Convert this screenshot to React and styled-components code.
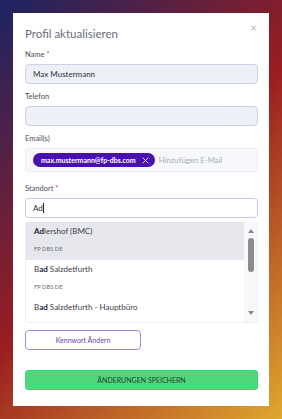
import React from "react";
import styled, { createGlobalStyle } from "styled-components";

const GlobalStyle = createGlobalStyle`
  html, body { margin: 0; padding: 0; }
  body {
    font-family: Lato, "Noto Sans", sans-serif;
    background: linear-gradient(135deg, #1b2463 0%, #9a1d20 50%, #e0a72e 100%);
    min-height: 419px;
  }
  * { box-sizing: border-box; }
`;

const Page = styled.div`
  padding: 13px;
  width: 282px;
  height: 419px;
`;

const Modal = styled.div`
  position: relative;
  background: #fff;
  width: 256px;
  height: 393px;
  padding: 12px 11px 0 12px;
  display: flex;
  flex-direction: column;
`;

const Title = styled.h2`
  margin: 0 0 7px 0;
  font-size: 11.5px;
  font-weight: 400;
  color: #6a6d7a;
  line-height: 18px;
`;

const Close = styled.button`
  position: absolute;
  top: 12px;
  right: 12px;
  border: 0;
  background: none;
  padding: 0;
  color: #b8bac2;
  font-family: "DejaVu Sans", sans-serif;
  font-size: 8px;
  line-height: 8px;
  cursor: pointer;
`;

const Field = styled.div`
  display: flex;
  flex-direction: column;
  gap: 4px;
  margin-bottom: ${(p) => p.$mb ?? 8}px;
`;

const Label = styled.label`
  font-size: 7.5px;
  line-height: 10px;
  color: #4a4d5a;
  span { color: #e0434f; }
`;

const Input = styled.div`
  height: 20px;
  border: 1px solid ${(p) => (p.$white ? "#c7cbe4" : "#cdd1e8")};
  background: ${(p) => (p.$white ? "#fff" : "#eef0f8")};
  border-radius: 4px;
  display: flex;
  align-items: center;
  padding: 0 7px;
  font-size: 8px;
  color: #2d2f3a;
`;

const EmailBox = styled.div`
  height: 24px;
  border: 1px solid #eceef5;
  background: #f7f8fc;
  border-radius: 3px;
  display: flex;
  align-items: center;
  gap: 4px;
  padding: 0 7px;
`;

const Chip = styled.div`
  height: 14px;
  border-radius: 8px;
  background: #4a10ad;
  color: #fff;
  font-weight: 700;
  font-size: 7px;
  display: flex;
  align-items: center;
  gap: 6px;
  padding: 0 6px 0 8px;
`;

const Placeholder = styled.span`
  font-size: 7.8px;
  color: #a9acb8;
`;

const Caret = styled.span`
  display: inline-block;
  width: 1px;
  height: 10px;
  background: #222;
  margin-left: 0.5px;
`;

const Dropdown = styled.div`
  margin-top: 4px;
  height: 101px;
  border: 1px solid #eef0f4;
  border-top: 0;
  display: flex;
  overflow: hidden;
  border-radius: 0 0 3px 3px;
`;

const List = styled.div`
  flex: 1;
  display: flex;
  flex-direction: column;
`;

const Item = styled.div`
  height: 38px;
  flex-shrink: 0;
  background: ${(p) => (p.$active ? "#e6e7ec" : "#fff")};
  padding: 4px 8px 0 8px;
  display: flex;
  flex-direction: column;
`;

const ItemName = styled.div`
  font-size: 8px;
  line-height: 11px;
  color: #3a3c47;
  b { font-weight: 700; color: #23252e; }
`;

const ItemSub = styled.div`
  margin-top: 8px;
  font-size: 5.8px;
  line-height: 8px;
  color: #6d707c;
`;

const Scrollbar = styled.div`
  width: 13px;
  background: #f8f8fa;
  display: flex;
  flex-direction: column;
  align-items: center;
  padding-top: 7px;
`;

const Arrow = styled.div`
  width: 0;
  height: 0;
  border-left: 3.5px solid transparent;
  border-right: 3.5px solid transparent;
  ${(p) =>
    p.$down
      ? "border-top: 4px solid #8a8a8e; margin-top: auto; margin-bottom: 7px;"
      : "border-bottom: 4px solid #8a8a8e;"}
`;

const Thumb = styled.div`
  margin-top: 5px;
  width: 6px;
  height: 34px;
  background: #8c8c8f;
  border-radius: 3px;
`;

const OutlineButton = styled.button`
  margin-top: 7px;
  width: 116px;
  height: 20px;
  border: 1px solid #a58bdb;
  border-radius: 4px;
  background: #fff;
  color: #6a41b8;
  font-family: inherit;
  font-size: 7px;
  padding: 0;
`;

const SaveButton = styled.button`
  margin-top: 20px;
  width: 100%;
  height: 20px;
  border: 1px solid #43d472;
  border-radius: 3px;
  background: #4dd97b;
  color: #2a3a30;
  font-family: inherit;
  font-size: 7px;
  text-transform: uppercase;
  padding: 0;
`;

const items = [
  { bold: "Ad", rest: "lershof (BMC)", sub: "FP DBS DE", active: true },
  { pre: "B", bold: "ad", rest: " Salzdetfurth", sub: "FP DBS DE" },
  { pre: "B", bold: "ad", rest: " Salzdetfurth - Hauptbüro" },
];

export default function App() {
  return (
    <>
      <GlobalStyle />
      <Page>
        <Modal>
          <Close aria-label="close">✕</Close>
          <Title>Profil aktualisieren</Title>
          <Field>
            <Label>
              Name <span>*</span>
            </Label>
            <Input>Max Mustermann</Input>
          </Field>
          <Field>
            <Label>Telefon</Label>
            <Input />
          </Field>
          <Field $mb={12}>
            <Label>Email(s)</Label>
            <EmailBox>
              <Chip>
                max.mustermann@fp-dbs.com
                <svg width="7" height="7" viewBox="0 0 10 10">
                  <path d="M1 1 L9 9 M9 1 L1 9" stroke="#fff" strokeWidth="1.2" />
                </svg>
              </Chip>
              <Placeholder>Hinzufügen E-Mail</Placeholder>
            </EmailBox>
          </Field>
          <Field $mb={0}>
            <Label>
              Standort <span>*</span>
            </Label>
            <Input $white>
              Ad
              <Caret />
            </Input>
          </Field>
          <Dropdown>
            <List>
              {items.map((it, i) => (
                <Item key={i} $active={it.active}>
                  <ItemName>
                    {it.pre}
                    <b>{it.bold}</b>
                    {it.rest}
                  </ItemName>
                  {it.sub && <ItemSub>{it.sub}</ItemSub>}
                </Item>
              ))}
            </List>
            <Scrollbar>
              <Arrow />
              <Thumb />
              <Arrow $down />
            </Scrollbar>
          </Dropdown>
          <OutlineButton>Kennwort Ändern</OutlineButton>
          <SaveButton>Änderungen speichern</SaveButton>
        </Modal>
      </Page>
    </>
  );
}
